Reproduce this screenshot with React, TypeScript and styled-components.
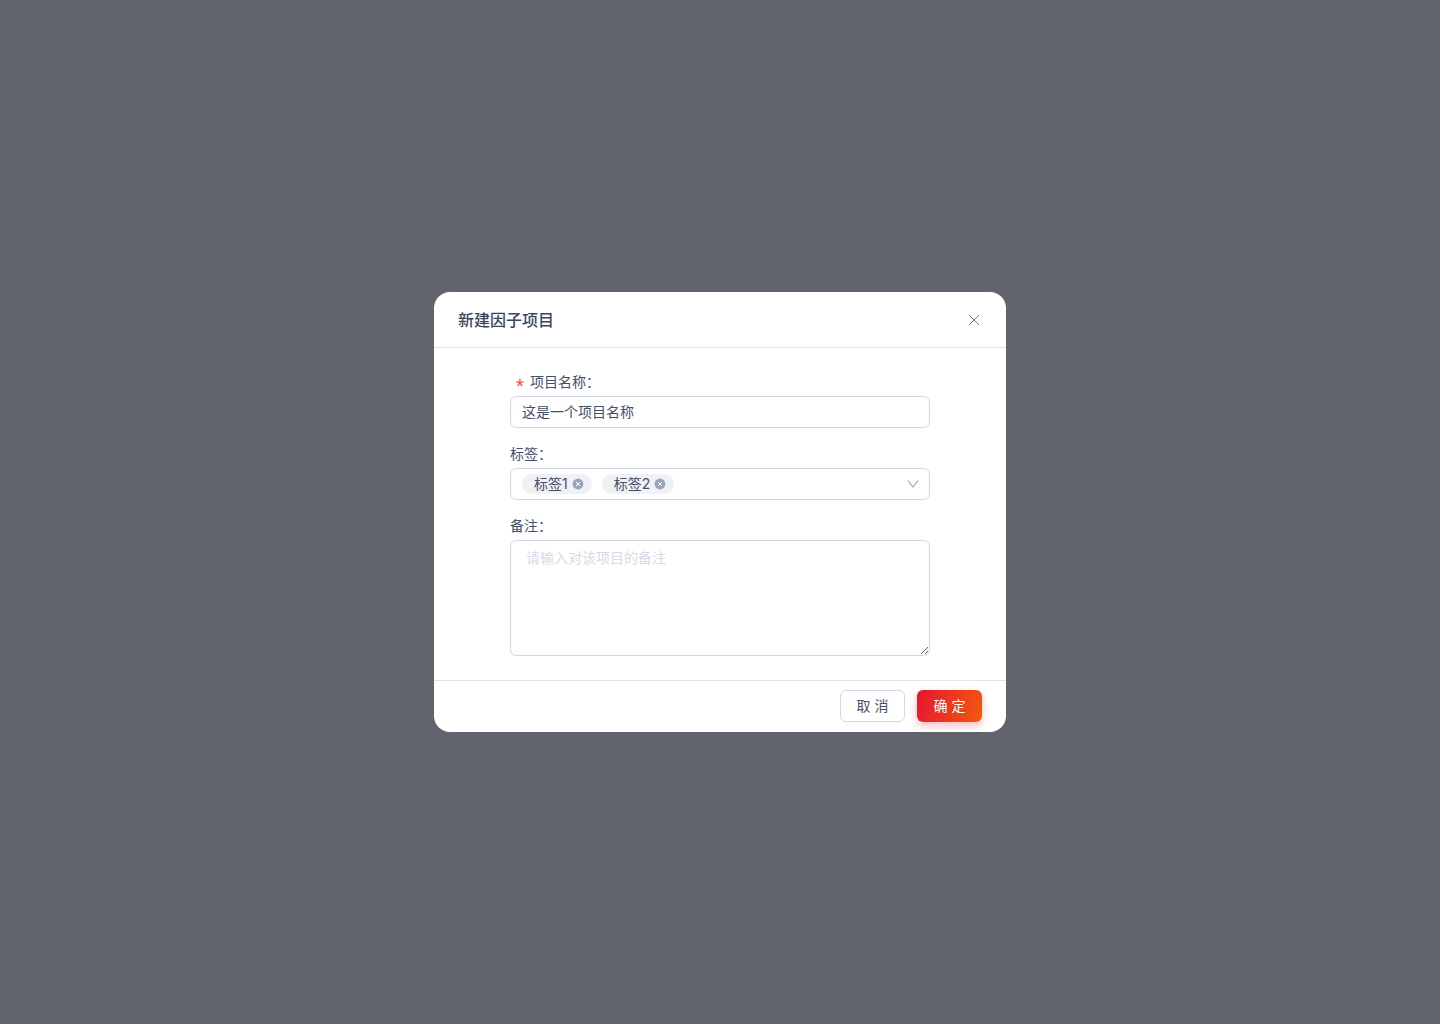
import React, { useState } from "react";
import styled, { createGlobalStyle } from "styled-components";

const text = "#454f66";
const border = "#d3d7e5";

const GlobalStyle = createGlobalStyle`
  *, *::before, *::after { box-sizing: border-box; }
  body {
    margin: 0;
    background: #61646c;
    color: ${text};
    font: 14px/20px Inter, "Noto Sans CJK SC", sans-serif;
  }
  button, input, select, textarea { font: inherit; color: inherit; }
`;

const Backdrop = styled.div`
  display: flex;
  align-items: center;
  justify-content: center;
  min-height: 100vh;
`;

const Modal = styled.form`
  width: 100%;
  max-width: 572px;
  background: #fff;
  border-radius: 16px;
`;

const Header = styled.header`
  display: flex;
  align-items: center;
  justify-content: space-between;
  padding: 16px 24px 15px;
  border-bottom: 1px solid #e3e5e8;
`;

const Title = styled.h1`
  margin: 0;
  color: #3b465c;
  font-size: 16px;
  line-height: 24px;
  font-weight: 500;
`;

const IconButton = styled.button`
  display: inline-flex;
  padding: 0;
  border: 0;
  background: none;
  cursor: pointer;
`;

const Body = styled.div`
  display: flex;
  flex-direction: column;
  gap: 16px;
  padding: 24px 76px;
`;

const Field = styled.div`
  display: flex;
  flex-direction: column;
  gap: 4px;
`;

const Label = styled.label<{ $required?: boolean }>`
  display: flex;
  align-items: center;
  gap: 6px;
  padding-left: ${(p) => (p.$required ? "6px" : "0")};
`;

const Required = styled.span`
  width: 8px;
  height: 16px;
  color: #ff4040;
  font: 20px/24px "Liberation Sans", sans-serif;
  text-align: center;
`;

const TextInput = styled.input`
  width: 100%;
  height: 32px;
  padding: 0 11px 2px;
  border: 1px solid ${border};
  border-radius: 6px;
  background: #fff;
  outline: none;
`;

const TagSelect = styled.div`
  display: flex;
  align-items: center;
  gap: 10px;
  height: 32px;
  padding: 0 10px 0 11px;
  border: 1px solid ${border};
  border-radius: 6px;
`;

const Tag = styled.span`
  display: inline-flex;
  align-items: center;
  gap: 4px;
  height: 20px;
  padding: 0 8px 0 12px;
  border-radius: 10px;
  background: #f0f1f5;
`;

const Picker = styled.div`
  display: grid;
  flex: 1;
  align-items: center;

  > * { grid-area: 1 / 1; }
  > svg { justify-self: end; pointer-events: none; }
`;

const Select = styled.select`
  width: 100%;
  height: 30px;
  border: 0;
  background: none;
  appearance: none;
  outline: none;
`;

const TextArea = styled.textarea`
  display: block;
  width: 100%;
  height: 116px;
  padding: 6px 15px;
  border: 1px solid ${border};
  border-radius: 6px;
  line-height: 22px;
  resize: vertical;
  outline: none;

  &::placeholder { color: #d6dae5; opacity: 1; }
`;

const Footer = styled.footer`
  display: flex;
  justify-content: flex-end;
  gap: 12px;
  padding: 9px 24px 10px;
  border-top: 1px solid #e0e3ec;
`;

const Button = styled.button<{ $primary?: boolean }>`
  min-width: 65px;
  height: 32px;
  padding: 0 15px;
  border: ${(p) => (p.$primary ? "0" : `1px solid ${border}`)};
  border-radius: 6px;
  background: ${(p) => (p.$primary ? "linear-gradient(105deg, #e6162f, #f2590d)" : "#fff")};
  box-shadow: ${(p) => (p.$primary ? "0 4px 8px rgba(230, 22, 47, 0.28)" : "none")};
  color: ${(p) => (p.$primary ? "#fff" : text)};
  cursor: pointer;
`;

const CloseIcon = () => (
  <svg width="16" height="16" viewBox="0 0 16 16" fill="none" stroke="#6c7a9c" aria-hidden="true">
    <path d="M3 3l10 10M13 3L3 13" />
  </svg>
);

const RemoveIcon = () => (
  <svg width="12" height="12" viewBox="0 0 12 12" fill="none" aria-hidden="true">
    <circle cx="6" cy="6" r="5.4" fill="#9aa5bb" />
    <path d="M4 4l4 4M8 4L4 8" stroke="#fff" strokeWidth="1" />
  </svg>
);

const ChevronIcon = () => (
  <svg width="12" height="12" viewBox="0 0 12 12" fill="none" stroke="#9aa5bb" strokeWidth="1.1" aria-hidden="true">
    <path d="M1.2 2.6L6 9l4.8-6.4" />
  </svg>
);

export default function App() {
  const [name, setName] = useState("这是一个项目名称");
  const [tags, setTags] = useState(["标签1", "标签2"]);

  return (
    <>
      <GlobalStyle />
      <Backdrop>
        <Modal role="dialog" aria-labelledby="dialog-title" onSubmit={(e) => e.preventDefault()}>
          <Header>
            <Title id="dialog-title">新建因子项目</Title>
            <IconButton type="button" aria-label="关闭">
              <CloseIcon />
            </IconButton>
          </Header>
          <Body>
            <Field>
              <Label htmlFor="name" $required>
                <Required>*</Required>
                项目名称：
              </Label>
              <TextInput id="name" required value={name} onChange={(e) => setName(e.target.value)} />
            </Field>
            <Field>
              <Label htmlFor="tags">标签：</Label>
              <TagSelect>
                {tags.map((tag) => (
                  <Tag key={tag}>
                    {tag}
                    <IconButton
                      type="button"
                      aria-label={`移除${tag}`}
                      onClick={() => setTags(tags.filter((t) => t !== tag))}
                    >
                      <RemoveIcon />
                    </IconButton>
                  </Tag>
                ))}
                <Picker>
                  <Select id="tags" defaultValue="">
                    <option value="" />
                  </Select>
                  <ChevronIcon />
                </Picker>
              </TagSelect>
            </Field>
            <Field>
              <Label htmlFor="remark">备注：</Label>
              <TextArea id="remark" placeholder="请输入对该项目的备注" />
            </Field>
          </Body>
          <Footer>
            <Button type="button">取 消</Button>
            <Button type="submit" $primary>确 定</Button>
          </Footer>
        </Modal>
      </Backdrop>
    </>
  );
}
